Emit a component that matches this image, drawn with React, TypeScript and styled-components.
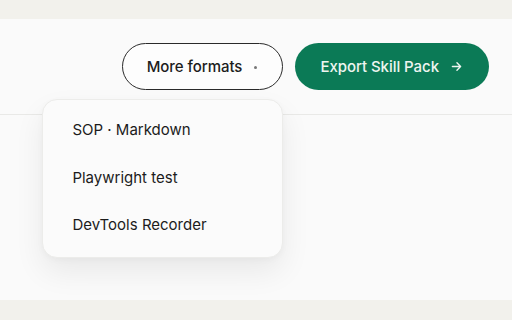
import styled, { createGlobalStyle } from 'styled-components'

const GlobalStyle = createGlobalStyle`
  html, body {
    margin: 0;
    padding: 0;
    background: #f2f1ec;
    font-family: Inter, "Liberation Sans", sans-serif;
    -webkit-font-smoothing: antialiased;
  }
`

const Page = styled.div`
  width: 512px;
  height: 320px;
  padding-top: 19px;
  box-sizing: border-box;
`

const Panel = styled.div`
  height: 281px;
  background: #fafafa;
`

const Header = styled.div`
  height: 96px;
  box-sizing: border-box;
  border-bottom: 1px solid #e9e9e7;
  display: flex;
  justify-content: flex-end;
  align-items: flex-start;
  gap: 12px;
  padding: 24px 23px 0 0;
`

const MenuWrap = styled.div`
  position: relative;
`

const Pill = styled.button<{ $primary?: boolean }>`
  height: 47px;
  border-radius: 24px;
  box-sizing: border-box;
  display: flex;
  align-items: center;
  font-family: inherit;
  font-size: 15px;
  font-weight: 500;
  letter-spacing: -0.05px;
  cursor: pointer;
  border: ${p => (p.$primary ? 'none' : '1.5px solid #2a2a2a')};
  background: ${p => (p.$primary ? '#0b7a56' : '#fdfdfd')};
  color: ${p => (p.$primary ? '#eef5f0' : '#1c1c1c')};
  padding: ${p => (p.$primary ? '0 27px 0 25px' : '0 25px 0 24px')};
`

const Caret = styled.span`
  width: 3px;
  height: 3px;
  border-radius: 50%;
  background: #777;
  margin-left: 12px;
  margin-top: 2px;
`

const Arrow = styled.svg`
  margin-left: 12px;
`

const Menu = styled.div`
  position: absolute;
  top: 56px;
  right: 0;
  width: 241px;
  box-sizing: border-box;
  background: #fbfbfb;
  border: 1px solid #ececea;
  border-radius: 15px;
  box-shadow: 0 14px 30px rgba(0, 0, 0, 0.07), 0 2px 6px rgba(0, 0, 0, 0.03);
  padding: 6px 0 8px;
  display: flex;
  flex-direction: column;
`

const Item = styled.div`
  height: 47.5px;
  display: flex;
  align-items: center;
  padding-left: 29px;
  font-size: 15px;
  font-weight: 400;
  color: #1c1c1c;
`

const formats = ['SOP · Markdown', 'Playwright test', 'DevTools Recorder']

export default function App() {
  return (
    <>
      <GlobalStyle />
      <Page>
        <Panel>
          <Header>
            <MenuWrap>
              <Pill>
                More formats
                <Caret />
              </Pill>
              <Menu>
                {formats.map(f => (
                  <Item key={f}>{f}</Item>
                ))}
              </Menu>
            </MenuWrap>
            <Pill $primary>
              Export Skill Pack
              <Arrow width="11" height="11" viewBox="0 0 12 12" fill="none">
                <path d="M1.5 6h9M6.5 2l4 4-4 4" stroke="#eef5f0" strokeWidth="1.5" strokeLinecap="round" strokeLinejoin="round" />
              </Arrow>
            </Pill>
          </Header>
        </Panel>
      </Page>
    </>
  )
}
